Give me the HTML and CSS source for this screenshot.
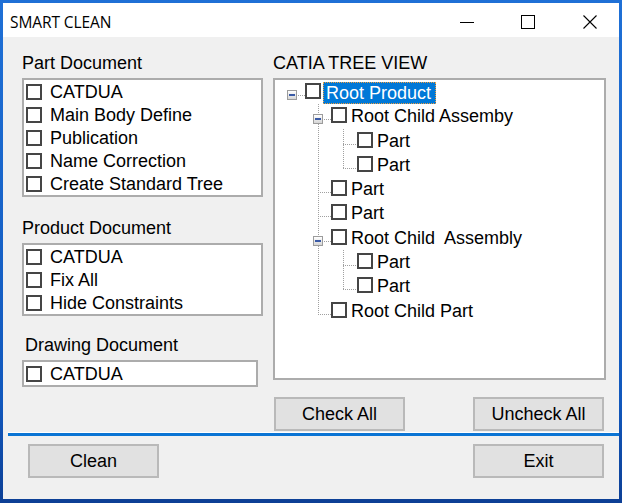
FILE: index.html
```html
<!DOCTYPE html>
<html>
<head>
<meta charset="utf-8">
<title>SMART CLEAN</title>
<link rel="stylesheet" href="styles.css">
</head>
<body>
<div class="window">
  <div class="titlebar">
    <span class="title">SMART CLEAN</span>
    <div class="caption">
      <svg class="cap-min" width="14" height="14" viewBox="0 0 14 14"><line x1="0" y1="7.5" x2="14" y2="7.5" stroke="#000" stroke-width="1"/></svg>
      <svg class="cap-max" width="14" height="14" viewBox="0 0 14 14"><rect x="0.5" y="0.5" width="13" height="13" fill="none" stroke="#000" stroke-width="1"/></svg>
      <svg class="cap-close" width="14" height="14" viewBox="0 0 14 14"><path d="M0.5 0.5 L13.5 13.5 M13.5 0.5 L0.5 13.5" stroke="#000" stroke-width="1.1" fill="none"/></svg>
    </div>
  </div>
  <div class="content">
    <div class="main">
      <div class="leftcol">
        <div class="glabel">Part Document</div>
        <div class="list">
          <div class="item"><span class="cb"></span><span class="txt">CATDUA</span></div>
          <div class="item"><span class="cb"></span><span class="txt">Main Body Define</span></div>
          <div class="item"><span class="cb"></span><span class="txt">Publication</span></div>
          <div class="item"><span class="cb"></span><span class="txt">Name Correction</span></div>
          <div class="item"><span class="cb"></span><span class="txt">Create Standard Tree</span></div>
        </div>
        <div class="glabel gap">Product Document</div>
        <div class="list">
          <div class="item"><span class="cb"></span><span class="txt">CATDUA</span></div>
          <div class="item"><span class="cb"></span><span class="txt">Fix All</span></div>
          <div class="item"><span class="cb"></span><span class="txt">Hide Constraints</span></div>
        </div>
        <div class="glabel gap2 indent">Drawing Document</div>
        <div class="list narrow">
          <div class="item"><span class="cb"></span><span class="txt">CATDUA</span></div>
        </div>
      </div>
      <div class="rightcol">
        <div class="glabel">CATIA TREE VIEW</div>
        <div class="tree">
          <div class="row l0"><span class="exp"></span><span class="cb"></span><span class="tl sel">Root Product</span></div>
          <div class="kids k1">
            <div class="row l1 hasexp"><span class="exp"></span><span class="cb"></span><span class="tl">Root Child Assemby</span></div>
            <div class="kids k2">
              <div class="row l2"><span class="cb"></span><span class="tl">Part</span></div>
              <div class="row l2"><span class="cb"></span><span class="tl">Part</span></div>
            </div>
            <div class="row l1"><span class="cb"></span><span class="tl">Part</span></div>
            <div class="row l1"><span class="cb"></span><span class="tl">Part</span></div>
            <div class="row l1 hasexp"><span class="exp"></span><span class="cb"></span><span class="tl">Root Child&nbsp; Assembly</span></div>
            <div class="kids k2">
              <div class="row l2"><span class="cb"></span><span class="tl">Part</span></div>
              <div class="row l2"><span class="cb"></span><span class="tl">Part</span></div>
            </div>
            <div class="row l1"><span class="cb"></span><span class="tl">Root Child Part</span></div>
          </div>
        </div>
        <div class="treebtns">
          <button class="btn">Check All</button>
          <button class="btn">Uncheck All</button>
        </div>
      </div>
    </div>
    <div class="sep"></div>
    <div class="actions">
      <button class="btn">Clean</button>
      <button class="btn">Exit</button>
    </div>
  </div>
</div>
</body>
</html>
```

FILE: styles.css
```css
* { box-sizing: border-box; }
html, body { margin: 0; padding: 0; }
body {
  width: 622px;
  height: 503px;
  overflow: hidden;
  background: linear-gradient(#1f70d6, #1158bd 80%, #0d3f95);
  font-family: "Liberation Sans", Arial, sans-serif;
  font-size: 18px;
  color: #000;
}
.window {
  margin: 3px 3px 0 3px;
  width: 616px;
  height: 496px;
  display: flex;
  flex-direction: column;
  background: #f0f0f0;
}
.titlebar {
  height: 34px;
  background: #fff;
  display: flex;
  align-items: center;
  padding-top: 3px;
}
.title {
  padding-left: 7px;
  font-family: "Open Sans", "Noto Sans", sans-serif;
  font-size: 15.5px;
  color: #000;
  letter-spacing: -0.1px;
}
.caption {
  margin-left: auto;
  display: flex;
  align-items: center;
  padding-right: 22px;
}
.cap-max { margin-left: 47px; }
.cap-close { margin-left: 48px; }
.content {
  flex: 1;
  display: flex;
  flex-direction: column;
}
.main {
  display: flex;
  padding: 16px 0 0 19px;
}
.leftcol {
  width: 241px;
  display: flex;
  flex-direction: column;
}
.rightcol {
  width: 333px;
  margin-left: 10px;
  display: flex;
  flex-direction: column;
}
.glabel {
  height: 20px;
  line-height: 20px;
  margin-bottom: 5px;
  white-space: nowrap;
}
.glabel.gap { margin-top: 21px; }
.glabel.gap2 { margin-top: 19px; }
.glabel.indent { padding-left: 3px; }
.list {
  background: #fff;
  border: 2px solid #acacac;
  width: 241px;
}
.list.narrow { width: 236px; }
.item {
  height: 23px;
  display: flex;
  align-items: flex-start;
  padding-left: 2px;
}
.cb {
  flex: none;
  width: 16px;
  height: 16px;
  border: 2px solid #454545;
  background: #fff;
}
.item .cb { margin-top: 4px; }
.item .txt {
  margin-left: 8px;
  line-height: 24px;
  white-space: nowrap;
}
.tree {
  width: 333px;
  height: 302px;
  background: #fff;
  border: 2px solid #acacac;
}
.kids { position: relative; }
.kids::before {
  content: "";
  position: absolute;
  top: 0;
  bottom: 9px;
  width: 1px;
  background: repeating-linear-gradient(to bottom, #a0a0a0 0 1px, transparent 1px 2px);
}
.k1::before { left: 43px; }
.k2::before { left: 68px; }
.row {
  position: relative;
  height: 24.3px;
  display: flex;
  align-items: flex-start;
}
.row::before {
  content: "";
  position: absolute;
  top: 15px;
  height: 1px;
  background: repeating-linear-gradient(to right, #a0a0a0 0 1px, transparent 1px 2px);
}
.row.l0 { padding-left: 12px; }
.row.l0::before { left: 17px; width: 13px; }
.row.l1 { padding-left: 56px; }
.row.l1.hasexp { padding-left: 38px; }
.row.l1::before { left: 43px; width: 13px; }
.row.l2 { padding-left: 82px; }
.row.l2::before { left: 68px; width: 14px; }
.exp {
  position: relative;
  z-index: 1;
  flex: none;
  width: 10px;
  height: 10px;
  margin-top: 10px;
  margin-right: 8px;
  border: 1px solid #9c9c9c;
  background: linear-gradient(#ffffff, #d6d6d6);
}
.exp::after {
  content: "";
  position: absolute;
  left: 1px;
  top: 3px;
  width: 6px;
  height: 2px;
  background: #3a5aa6;
}
.row .cb { margin-top: 3px; position: relative; z-index: 1; }
.tl {
  margin-left: 4px;
  line-height: 24px;
  white-space: nowrap;
}
.tl.sel {
  margin-left: 2px;
  margin-top: 1.5px;
  height: 22px;
  line-height: 22px;
  padding: 0 5px 0 3px;
  background: #0078d7;
  color: #fff;
  outline: 1px dotted #f0a040;
  outline-offset: -1px;
}
.treebtns {
  display: flex;
  justify-content: space-between;
  margin-top: 17px;
  padding: 0 2px 0 1px;
}
.btn {
  width: 131px;
  height: 34px;
  margin: 0;
  padding: 0;
  border: 2px solid #b9b9b9;
  background: #e1e1e1;
  font-family: "Liberation Sans", Arial, sans-serif;
  font-size: 18px;
  color: #000;
  line-height: 28px;
}
.sep {
  margin: 1px 0 0 5px;
  height: 4px;
  border-top: 1px solid #fff;
  background: #0a74d4;
}
.actions {
  display: flex;
  justify-content: space-between;
  margin-top: 8px;
  padding: 0 15px 0 25px;
}
```
